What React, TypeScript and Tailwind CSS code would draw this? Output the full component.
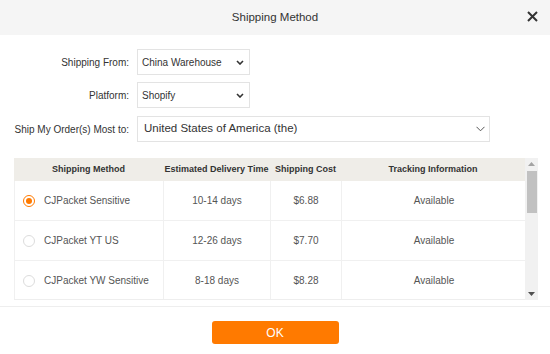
import { useState } from "react";

type Method = {
  name: string;
  time: string;
  cost: string;
  tracking: string;
};

const methods: Method[] = [
  { name: "CJPacket Sensitive", time: "10-14 days", cost: "$6.88", tracking: "Available" },
  { name: "CJPacket YT US", time: "12-26 days", cost: "$7.70", tracking: "Available" },
  { name: "CJPacket YW Sensitive", time: "8-18 days", cost: "$8.28", tracking: "Available" },
];

function Chevron({ thin }: { thin?: boolean }) {
  return thin ? (
    <svg width="9" height="6" viewBox="0 0 9 6" fill="none">
      <path d="M0.5 0.8L4.5 4.8L8.5 0.8" stroke="#555" strokeWidth="1" />
    </svg>
  ) : (
    <svg width="8" height="5" viewBox="0 0 8 5" fill="none">
      <path d="M1 1L4 4L7 1" stroke="#333" strokeWidth="1.6" />
    </svg>
  );
}

function FakeSelect({ value, wide }: { value: string; wide?: boolean }) {
  return (
    <div
      className={`flex items-center justify-between border border-[#e3e3e3] bg-white ${
        wide ? "h-[26px] w-[353px] pl-[6px] pr-[4px] text-[11.5px] text-[#333]" : "h-[26px] w-[113px] pl-[4px] pr-[5px] text-[10px] text-[#333]"
      }`}
    >
      <span>{value}</span>
      <Chevron thin={wide} />
    </div>
  );
}

function Radio({ checked }: { checked: boolean }) {
  return checked ? (
    <span className="flex h-[12px] w-[12px] items-center justify-center rounded-full border border-[#ff7a00] bg-white">
      <span className="h-[6px] w-[6px] rounded-full bg-[#ff7a00]" />
    </span>
  ) : (
    <span className="h-[12px] w-[12px] rounded-full border border-[#dcdcdc] bg-white" />
  );
}

export default function App() {
  const [selected, setSelected] = useState(0);

  return (
    <div className="h-[354px] w-[550px] overflow-hidden bg-white font-['Liberation_Sans',Arial,sans-serif] text-[#333]">
      {/* header */}
      <div className="relative flex h-[35px] items-center justify-center bg-[#f5f5f5]">
        <span className="text-[11.5px] text-[#333]">Shipping Method</span>
        <button className="absolute right-[12px] top-[10px] flex h-[12px] w-[12px] items-center justify-center">
          <svg width="11" height="11" viewBox="0 0 11 11" fill="none">
            <path d="M1 1L10 10M10 1L1 10" stroke="#333" strokeWidth="2" />
          </svg>
        </button>
      </div>

      {/* filters */}
      <div className="mt-[14px] grid grid-cols-[129px_auto] items-center gap-x-[8px] gap-y-[7px] text-[10px] text-[#333]">
        <span className="text-right">Shipping From:</span>
        <FakeSelect value="China Warehouse" />
        <span className="text-right">Platform:</span>
        <FakeSelect value="Shopify" />
        <span className="mt-[1px] text-right">Ship My Order(s) Most to:</span>
        <div className="mt-[1px]">
          <FakeSelect value="United States of America (the)" wide />
        </div>
      </div>

      {/* table */}
      <div className="ml-[14px] mt-[16px] flex h-[142px] w-[524px]">
        <div className="h-[142px] w-[511px] overflow-hidden border-b border-[#eeeeee]">
          <div className="grid h-[23px] grid-cols-[149px_107px_71px_184px] bg-[#efede8] text-[9px] font-bold text-[#333]">
            <div className="flex items-center justify-center">Shipping Method</div>
            <div className="flex items-center justify-center">Estimated Delivery Time</div>
            <div className="flex items-center justify-center">Shipping Cost</div>
            <div className="flex items-center justify-center">Tracking Information</div>
          </div>
          {methods.map((m, i) => (
            <div
              key={m.name}
              onClick={() => setSelected(i)}
              className="grid h-[40px] cursor-pointer grid-cols-[149px_107px_71px_184px] border-b border-l border-[#f0f0f0] text-[10px] text-[#555]"
            >
              <div className="flex items-center gap-[9px] border-r border-[#f0f0f0] pl-[8px]">
                <Radio checked={selected === i} />
                <span>{m.name}</span>
              </div>
              <div className="flex items-center justify-center border-r border-[#f0f0f0]">{m.time}</div>
              <div className="flex items-center justify-center border-r border-[#f0f0f0]">{m.cost}</div>
              <div className="flex items-center justify-center">{m.tracking}</div>
            </div>
          ))}
        </div>
        {/* scrollbar */}
        <div className="flex w-[13px] flex-col items-center bg-[#f1f1f1] py-[4px]">
          <svg width="7" height="4" viewBox="0 0 7 4">
            <path d="M0 4L3.5 0L7 4Z" fill="#a3a3a3" />
          </svg>
          <div className="mt-[5px] h-[42px] w-[10px] bg-[#c1c1c1]" />
          <div className="flex-1" />
          <svg width="7" height="4" viewBox="0 0 7 4">
            <path d="M0 0L3.5 4L7 0Z" fill="#505050" />
          </svg>
        </div>
      </div>

      {/* footer */}
      <div className="mt-[6px] border-t border-[#eeeeee] pt-[14px]">
        <div className="flex justify-center">
          <button className="h-[23px] w-[127px] rounded-[3px] bg-[#ff7a00] text-[12px] text-white">OK</button>
        </div>
      </div>
    </div>
  );
}
